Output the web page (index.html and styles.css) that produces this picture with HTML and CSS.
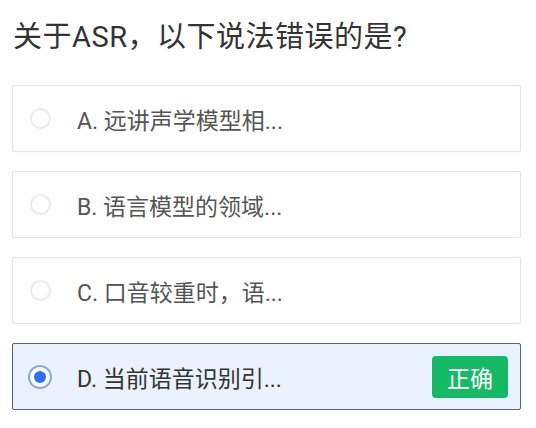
FILE: index.html
```html
<!DOCTYPE html>
<html lang="zh">
<head>
<meta charset="utf-8">
<link rel="stylesheet" href="styles.css">
</head>
<body>
<div class="page">
  <h1 class="question">关于ASR，以下说法错误的是?</h1>
  <div class="options">
    <div class="option">
      <span class="radio"></span>
      <span class="label">A. 远讲声学模型相...</span>
    </div>
    <div class="option">
      <span class="radio"></span>
      <span class="label">B. 语言模型的领域...</span>
    </div>
    <div class="option">
      <span class="radio"></span>
      <span class="label">C. 口音较重时，语...</span>
    </div>
    <div class="option selected">
      <span class="radio"><span class="dot"></span></span>
      <span class="label">D. 当前语音识别引...</span>
      <span class="badge">正确</span>
    </div>
  </div>
</div>
</body>
</html>
```

FILE: styles.css
```css
html, body {
  margin: 0;
  padding: 0;
  background: #ffffff;
}
body {
  font-family: "Roboto", "Noto Sans CJK SC", sans-serif;
  color: #333333;
}
.page {
  padding: 0 15px 0 12px;
}
.question {
  margin: 0;
  padding: 17px 0 0 1px;
  font-size: 29px;
  letter-spacing: 0.5px;
  font-weight: 400;
  line-height: 40px;
  color: #333333;
}
.options {
  display: flex;
  flex-direction: column;
  gap: 19px;
  margin-top: 28px;
}
.option {
  display: flex;
  align-items: center;
  height: 65px;
  border: 1px solid #e6e6e6;
  border-radius: 2px;
  background: #ffffff;
  box-shadow: 0 0 2px rgba(0, 0, 0, 0.06);
  padding: 0 12px 0 17px;
}
.radio {
  width: 21px;
  height: 21px;
  border: 2px solid #ebebeb;
  border-radius: 50%;
  box-sizing: border-box;
  flex: none;
  display: flex;
  align-items: center;
  justify-content: center;
}
.label {
  margin-left: 26px;
  font-size: 23px;
  color: #555555;
  flex: 1;
}
.option.selected {
  background: #eaf2fd;
  border-color: #5b6275;
}
.option.selected .radio {
  width: 24px;
  height: 24px;
  margin-left: -2px;
  border: 2px solid #8fa9d8;
  background: #ffffff;
}
.option.selected .label {
  margin-left: 25px;
  color: #333333;
}
.dot {
  width: 12px;
  height: 12px;
  border-radius: 50%;
  background: #2f6fef;
}
.badge {
  flex: none;
  width: 76px;
  height: 42px;
  border-radius: 4px;
  background: #17b866;
  color: #ffffff;
  font-size: 23px;
  display: flex;
  align-items: center;
  justify-content: center;
}
```
